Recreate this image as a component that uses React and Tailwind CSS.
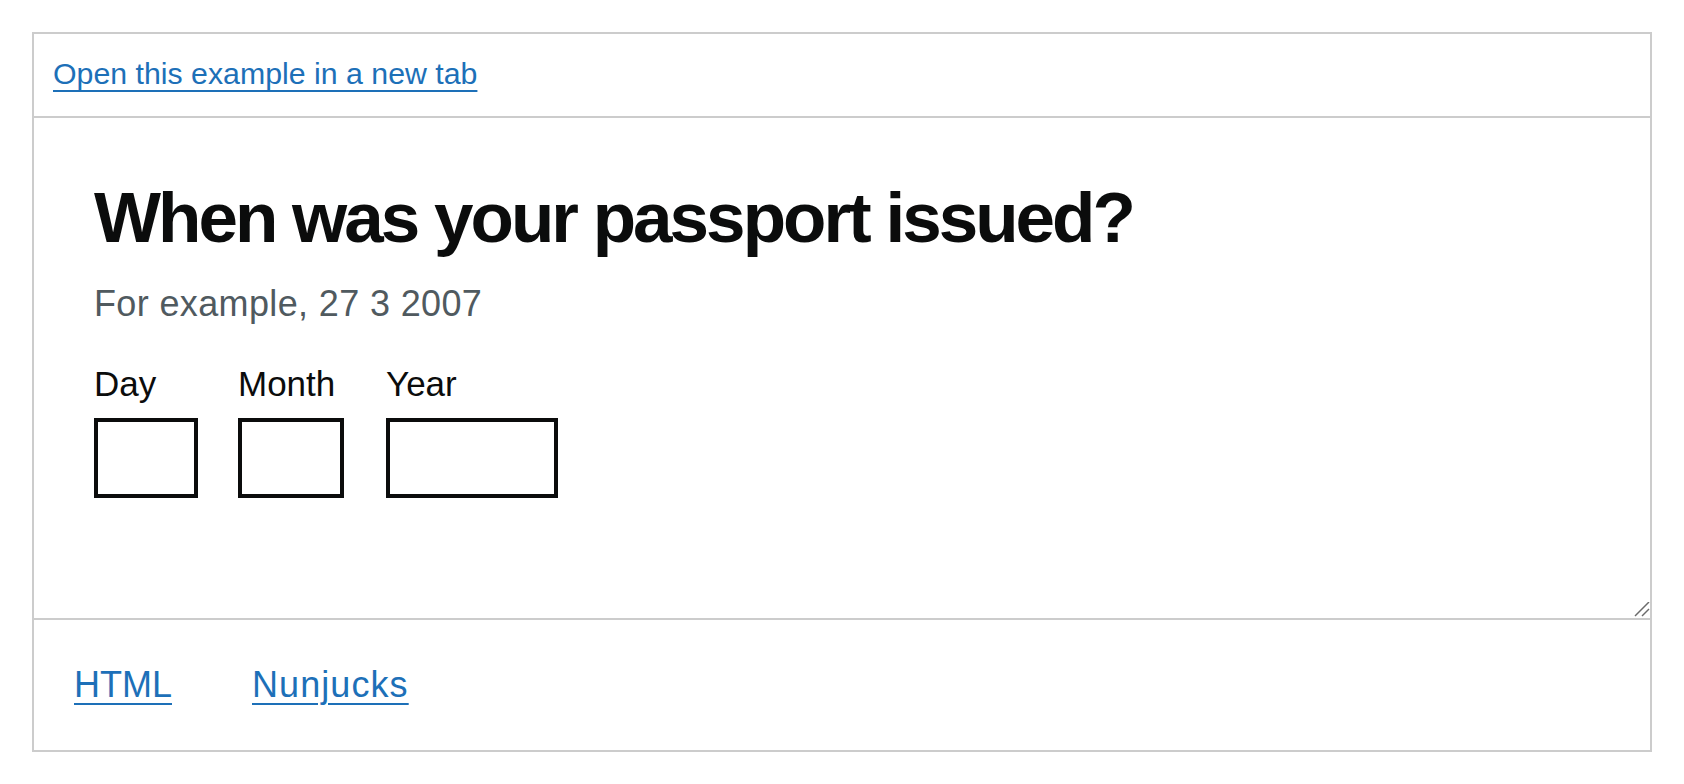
import React from "react";

const DateField = ({ label, width, className }) => (
  <div className={`flex flex-col ${className || ""}`}>
    <label className="text-[35px] leading-[40px] text-[#0b0c0c]">{label}</label>
    <input
      type="text"
      className={`mt-[14px] h-[80px] border-4 border-[#0b0c0c] bg-white outline-none ${width}`}
    />
  </div>
);

const App = () => {
  return (
    <div
      className="min-h-screen bg-white p-8"
      style={{ fontFamily: '"Liberation Sans", Arial, sans-serif' }}
    >
      <div className="border-2 border-[#cccccc]">
        {/* example header */}
        <div className="flex h-[84px] items-center border-b-2 border-[#cccccc] pb-[2px] pl-[19px]">
          <a
            href="#"
            className="text-[30.3px] leading-[38px] text-[#1d70b8] underline decoration-2 underline-offset-[6px]"
          >
            Open this example in a new tab
          </a>
        </div>

        {/* example frame */}
        <div className="relative h-[502px] border-b-2 border-[#cccccc] pl-[60px] pt-[64px]">
          <h1 className="text-[71px] font-bold leading-[71px] tracking-[-0.042em] text-[#0b0c0c]">
            When was your passport issued?
          </h1>
          <div className="mt-[31px] text-[36px] leading-[40px] tracking-[0.01em] text-[#505a5f]">
            For example, 27 3 2007
          </div>
          <div className="mt-[40px] flex">
            <DateField label="Day" width="w-[104px]" className="mr-[40px]" />
            <DateField label="Month" width="w-[106px]" className="mr-[42px]" />
            <DateField label="Year" width="w-[172px]" />
          </div>

          <svg
            className="absolute bottom-0 right-0"
            width="16"
            height="16"
            viewBox="0 0 16 16"
          >
            <line x1="1" y1="14" x2="15" y2="0" stroke="#6b6b6b" strokeWidth="1.5" />
            <line x1="8" y1="14" x2="15" y2="7" stroke="#6b6b6b" strokeWidth="1.5" />
          </svg>
        </div>

        {/* code tabs */}
        <div className="flex h-[130px] items-center gap-[80px] pl-[40px]">
          <a
            href="#"
            className="text-[36px] leading-[40px] text-[#1d70b8] underline decoration-2 underline-offset-[6px]"
          >
            HTML
          </a>
          <a
            href="#"
            className="text-[36px] leading-[40px] tracking-[0.03em] text-[#1d70b8] underline decoration-2 underline-offset-[6px]"
          >
            Nunjucks
          </a>
        </div>
      </div>
    </div>
  );
};

export default App;
